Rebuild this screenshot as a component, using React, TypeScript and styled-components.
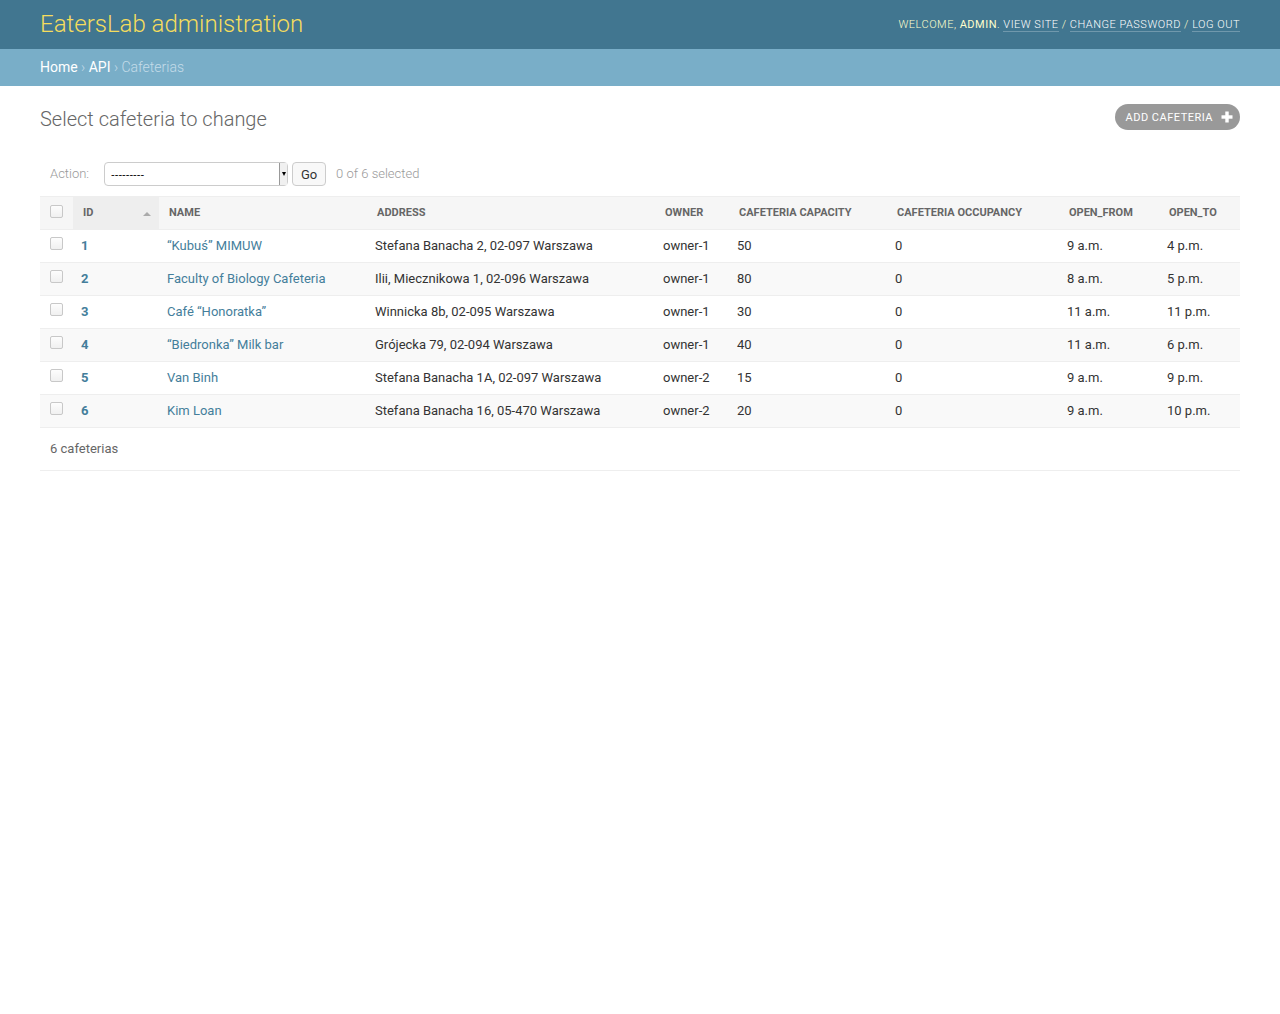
import React from "react";
import styled, { createGlobalStyle } from "styled-components";

const Global = createGlobalStyle`
  html, body { margin: 0; padding: 0; background: #fff; }
  body {
    font-family: Roboto, "Lucida Grande", Verdana, Arial, sans-serif;
    color: #333;
    font-size: 14px;
  }
  * { box-sizing: border-box; }
`;

const Header = styled.header`
  display: flex;
  align-items: center;
  justify-content: space-between;
  height: 49px;
  padding: 0 40px 2px;
  background: #417690;
`;

const Branding = styled.h1`
  margin: 0;
  font-size: 24px;
  font-weight: 300;
  color: #f5dd5d;
  line-height: 28px;
`;

const UserTools = styled.div`
  font-size: 11px;
  letter-spacing: 0.5px;
  text-transform: uppercase;
  font-weight: 300;
  color: #ffc;
  line-height: 14px;
  padding-top: 2px;
  strong { font-weight: 400; color: #ffc; }
`;

const ToolLink = styled.a`
  color: #fff;
  text-decoration: none;
  border-bottom: 1px solid rgba(255, 255, 255, 0.25);
  cursor: pointer;
`;

const Breadcrumbs = styled.nav`
  background: #79aec8;
  padding: 9px 40px 10px;
  font-size: 14px;
  line-height: 18px;
  color: #c4dce8;
  font-weight: 300;
`;

const Crumb = styled.a`
  color: #fff;
  text-decoration: none;
  font-weight: 400;
`;

const Content = styled.main`
  padding: 20px 40px;
`;

const TitleRow = styled.div`
  display: flex;
  justify-content: space-between;
  align-items: flex-start;
  margin-bottom: 20px;
`;

const Title = styled.h1`
  margin: 0;
  font-size: 20px;
  font-weight: 300;
  color: #666;
  line-height: 26px;
`;

const AddButton = styled.a`
  display: flex;
  align-items: center;
  gap: 8px;
  height: 26px;
  margin-top: -2px;
  padding: 0 7px 0 11px;
  border-radius: 15px;
  background: #999;
  color: #fff;
  font-size: 11px;
  letter-spacing: 0.5px;
  text-transform: uppercase;
  font-weight: 400;
  text-decoration: none;
`;

const Actions = styled.div`
  display: flex;
  align-items: center;
  padding: 10px 10px 10px 10px;
  color: #999;
  font-size: 13px;
  line-height: 24px;
`;

const ActionLabel = styled.label`
  margin-right: 15px;
  font-weight: 300;
`;

const SelectWrap = styled.span`
  position: relative;
  display: inline-block;
  width: 184px;
  height: 24px;
`;

const Select = styled.select`
  appearance: none;
  width: 100%;
  height: 24px;
  border: 1px solid #ccc;
  border-radius: 4px;
  background: #fff;
  padding: 0 6px;
  font-family: "Liberation Sans", Arial, sans-serif;
  font-size: 11px;
  color: #000;
`;

const SelectArrow = styled.span`
  position: absolute;
  right: 1px;
  top: 1px;
  bottom: 1px;
  width: 8px;
  background: #f0f0f0;
  border-left: 1px solid #999;
  display: flex;
  align-items: center;
  justify-content: center;
  pointer-events: none;
  &::after {
    content: "";
    border-left: 2.5px solid transparent;
    border-right: 2.5px solid transparent;
    border-top: 4px solid #000;
  }
`;

const GoButton = styled.button`
  margin-left: 4px;
  height: 24px;
  width: 34px;
  padding: 0;
  border: 1px solid #ccc;
  border-radius: 4px;
  background: #f8f8f8;
  font-family: Roboto, sans-serif;
  font-size: 13px;
  color: #333;
`;

const Counter = styled.span`
  margin-left: 10px;
  color: #999;
  font-weight: 300;
`;

const Table = styled.table`
  width: 100%;
  border-collapse: collapse;
  table-layout: fixed;
  border-top: 1px solid #eee;
`;

const Th = styled.th<{ $sorted?: boolean }>`
  position: relative;
  text-align: left;
  background: ${(p) => (p.$sorted ? "#eee" : "#f6f6f6")};
  font-size: 11px;
  font-weight: 700;
  text-transform: uppercase;
  color: #666;
  padding: 7px 10px 9px;
  line-height: 15px;
  border-bottom: 1px solid #eee;
  white-space: nowrap;
  vertical-align: middle;
`;

const SortArrow = styled.span`
  position: absolute;
  right: 8px;
  top: 15px;
  border-left: 4px solid transparent;
  border-right: 4px solid transparent;
  border-bottom: 4px solid #aaa;
`;

const CheckTh = styled(Th)`
  padding: 8px 10px;
`;

const Row = styled.tr<{ $alt: boolean }>`
  background: ${(p) => (p.$alt ? "#f9f9f9" : "#fff")};
`;

const Td = styled.td`
  padding: 8px;
  font-size: 13px;
  line-height: 16px;
  border-bottom: 1px solid #eee;
  vertical-align: top;
  color: #333;
  white-space: nowrap;
`;

const CheckTd = styled(Td)`
  padding: 7px 10px 9px;
`;

const IdTh = styled.th`
  padding: 8px;
  font-size: 13px;
  line-height: 16px;
  border-bottom: 1px solid #eee;
  text-align: left;
  font-weight: 700;
  vertical-align: top;
`;

const Link = styled.a`
  color: #447e9b;
  text-decoration: none;
`;

const Checkbox = styled.input`
  appearance: none;
  display: inline-block;
  margin: 0;
  width: 13px;
  height: 13px;
  vertical-align: -1px;
  border: 1px solid #c8c8c8;
  border-radius: 2px;
  background: linear-gradient(#fdfdfd, #f0f0f0);
`;

const Paginator = styled.p`
  margin: 0;
  padding: 10px;
  font-size: 13px;
  line-height: 22px;
  color: #666;
  border-bottom: 1px solid #eee;
`;

const PlusIcon = () => (
  <svg width="12" height="12" viewBox="0 0 12 12">
    <rect x="4.3" y="0.5" width="3.4" height="11" fill="#fff" />
    <rect x="0.5" y="4.3" width="11" height="3.4" fill="#fff" />
  </svg>
);

const rows = [
  { id: 1, name: "\u201cKubu\u015b\u201d MIMUW", address: "Stefana Banacha 2, 02-097 Warszawa", owner: "owner-1", cap: 50, occ: 0, from: "9 a.m.", to: "4 p.m." },
  { id: 2, name: "Faculty of Biology Cafeteria", address: "Ilii, Miecznikowa 1, 02-096 Warszawa", owner: "owner-1", cap: 80, occ: 0, from: "8 a.m.", to: "5 p.m." },
  { id: 3, name: "Caf\u00e9 \u201cHonoratka\u201d", address: "Winnicka 8b, 02-095 Warszawa", owner: "owner-1", cap: 30, occ: 0, from: "11 a.m.", to: "11 p.m." },
  { id: 4, name: "\u201cBiedronka\u201d Milk bar", address: "Gr\u00f3jecka 79, 02-094 Warszawa", owner: "owner-1", cap: 40, occ: 0, from: "11 a.m.", to: "6 p.m." },
  { id: 5, name: "Van Binh", address: "Stefana Banacha 1A, 02-097 Warszawa", owner: "owner-2", cap: 15, occ: 0, from: "9 a.m.", to: "9 p.m." },
  { id: 6, name: "Kim Loan", address: "Stefana Banacha 16, 05-470 Warszawa", owner: "owner-2", cap: 20, occ: 0, from: "9 a.m.", to: "10 p.m." },
];

const colWidths = [33, 86, 208, 288, 74, 158, 172, 100, 81];

export default function App() {
  return (
    <>
      <Global />
      <Header>
        <Branding>EatersLab administration</Branding>
        <UserTools>
          Welcome, <strong>admin</strong>. <ToolLink>View site</ToolLink> /{" "}
          <ToolLink>Change password</ToolLink> / <ToolLink>Log out</ToolLink>
        </UserTools>
      </Header>
      <Breadcrumbs>
        <Crumb>Home</Crumb> › <Crumb>API</Crumb> › Cafeterias
      </Breadcrumbs>
      <Content>
        <TitleRow>
          <Title>Select cafeteria to change</Title>
          <AddButton>
            Add cafeteria <PlusIcon />
          </AddButton>
        </TitleRow>
        <Actions>
          <ActionLabel>Action:</ActionLabel>
          <SelectWrap>
            <Select defaultValue="">
              <option value="">---------</option>
              <option value="delete">Delete selected cafeterias</option>
            </Select>
            <SelectArrow />
          </SelectWrap>
          <GoButton>Go</GoButton>
          <Counter>0 of 6 selected</Counter>
        </Actions>
        <Table>
          <colgroup>
            {colWidths.map((w, i) => (
              <col key={i} style={{ width: w }} />
            ))}
          </colgroup>
          <thead>
            <tr>
              <CheckTh>
                <Checkbox type="checkbox" />
              </CheckTh>
              <Th $sorted>
                Id
                <SortArrow />
              </Th>
              <Th>Name</Th>
              <Th>Address</Th>
              <Th>Owner</Th>
              <Th>Cafeteria capacity</Th>
              <Th>Cafeteria occupancy</Th>
              <Th>Open_from</Th>
              <Th>Open_to</Th>
            </tr>
          </thead>
          <tbody>
            {rows.map((r, i) => (
              <Row key={r.id} $alt={i % 2 === 1}>
                <CheckTd>
                  <Checkbox type="checkbox" />
                </CheckTd>
                <IdTh>
                  <Link>{r.id}</Link>
                </IdTh>
                <Td>
                  <Link>{r.name}</Link>
                </Td>
                <Td>{r.address}</Td>
                <Td>{r.owner}</Td>
                <Td>{r.cap}</Td>
                <Td>{r.occ}</Td>
                <Td>{r.from}</Td>
                <Td>{r.to}</Td>
              </Row>
            ))}
          </tbody>
        </Table>
        <Paginator>6 cafeterias</Paginator>
      </Content>
    </>
  );
}
